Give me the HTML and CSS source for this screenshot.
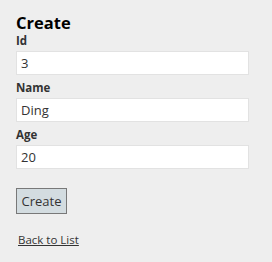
FILE: index.html
```html
<!DOCTYPE html>
<html lang="en">
<head>
  <meta charset="UTF-8" />
  <title>Create</title>
  <link rel="stylesheet" href="styles.css">
</head>
<body>

<div class="container">
  <h2>Create</h2>

  <form class="editor-form">
    <div class="field">
      <label for="Id">Id</label>
      <input type="text" id="Id" value="3" />
    </div>
    <div class="field">
      <label for="Name">Name</label>
      <input type="text" id="Name" value="Ding" />
    </div>
    <div class="field">
      <label for="Age">Age</label>
      <input type="text" id="Age" value="20" />
    </div>

    <p class="actions">
      <input type="submit" value="Create" />
    </p>
  </form>

  <div class="back">
    <a href="#">Back to List</a>
  </div>
</div>

</body>
</html>
```

FILE: styles.css
```css
body {
  margin: 0;
  background-color: #eee;
  color: #333;
  font-family: "Open Sans", "Noto Sans", sans-serif;
  font-size: 13px;
}
.container {
  padding: 13px 23px 0 16px;
}
.container h2 {
  margin: 0;
  font-size: 16.5px;
  line-height: 20px;
  font-weight: 700;
  color: #000;
}
.field {
  display: flex;
  flex-direction: column;
  margin-bottom: 5px;
}
.field label {
  font-weight: 700;
  font-size: 11.5px;
  line-height: 16px;
  margin-bottom: 2px;
}
.field input {
  box-sizing: border-box;
  height: 24px;
  width: 100%;
  margin: 0;
  padding: 2px 4px;
  border: 1px solid #e2e2e2;
  background: #fff;
  color: #333;
  font-family: inherit;
  font-size: 13px;
}
.actions {
  margin: 19px 0 0;
}
.actions input {
  box-sizing: border-box;
  height: 26px;
  width: 51px;
  padding: 0;
  border: 1px solid #787878;
  background: #d3dce0;
  color: #333;
  font-family: inherit;
  font-size: 13px;
  cursor: pointer;
}
.back {
  margin-top: 17px;
  padding-left: 2px;
  line-height: 17px;
}
.back a {
  color: #333;
  font-size: 11.5px;
}
```
